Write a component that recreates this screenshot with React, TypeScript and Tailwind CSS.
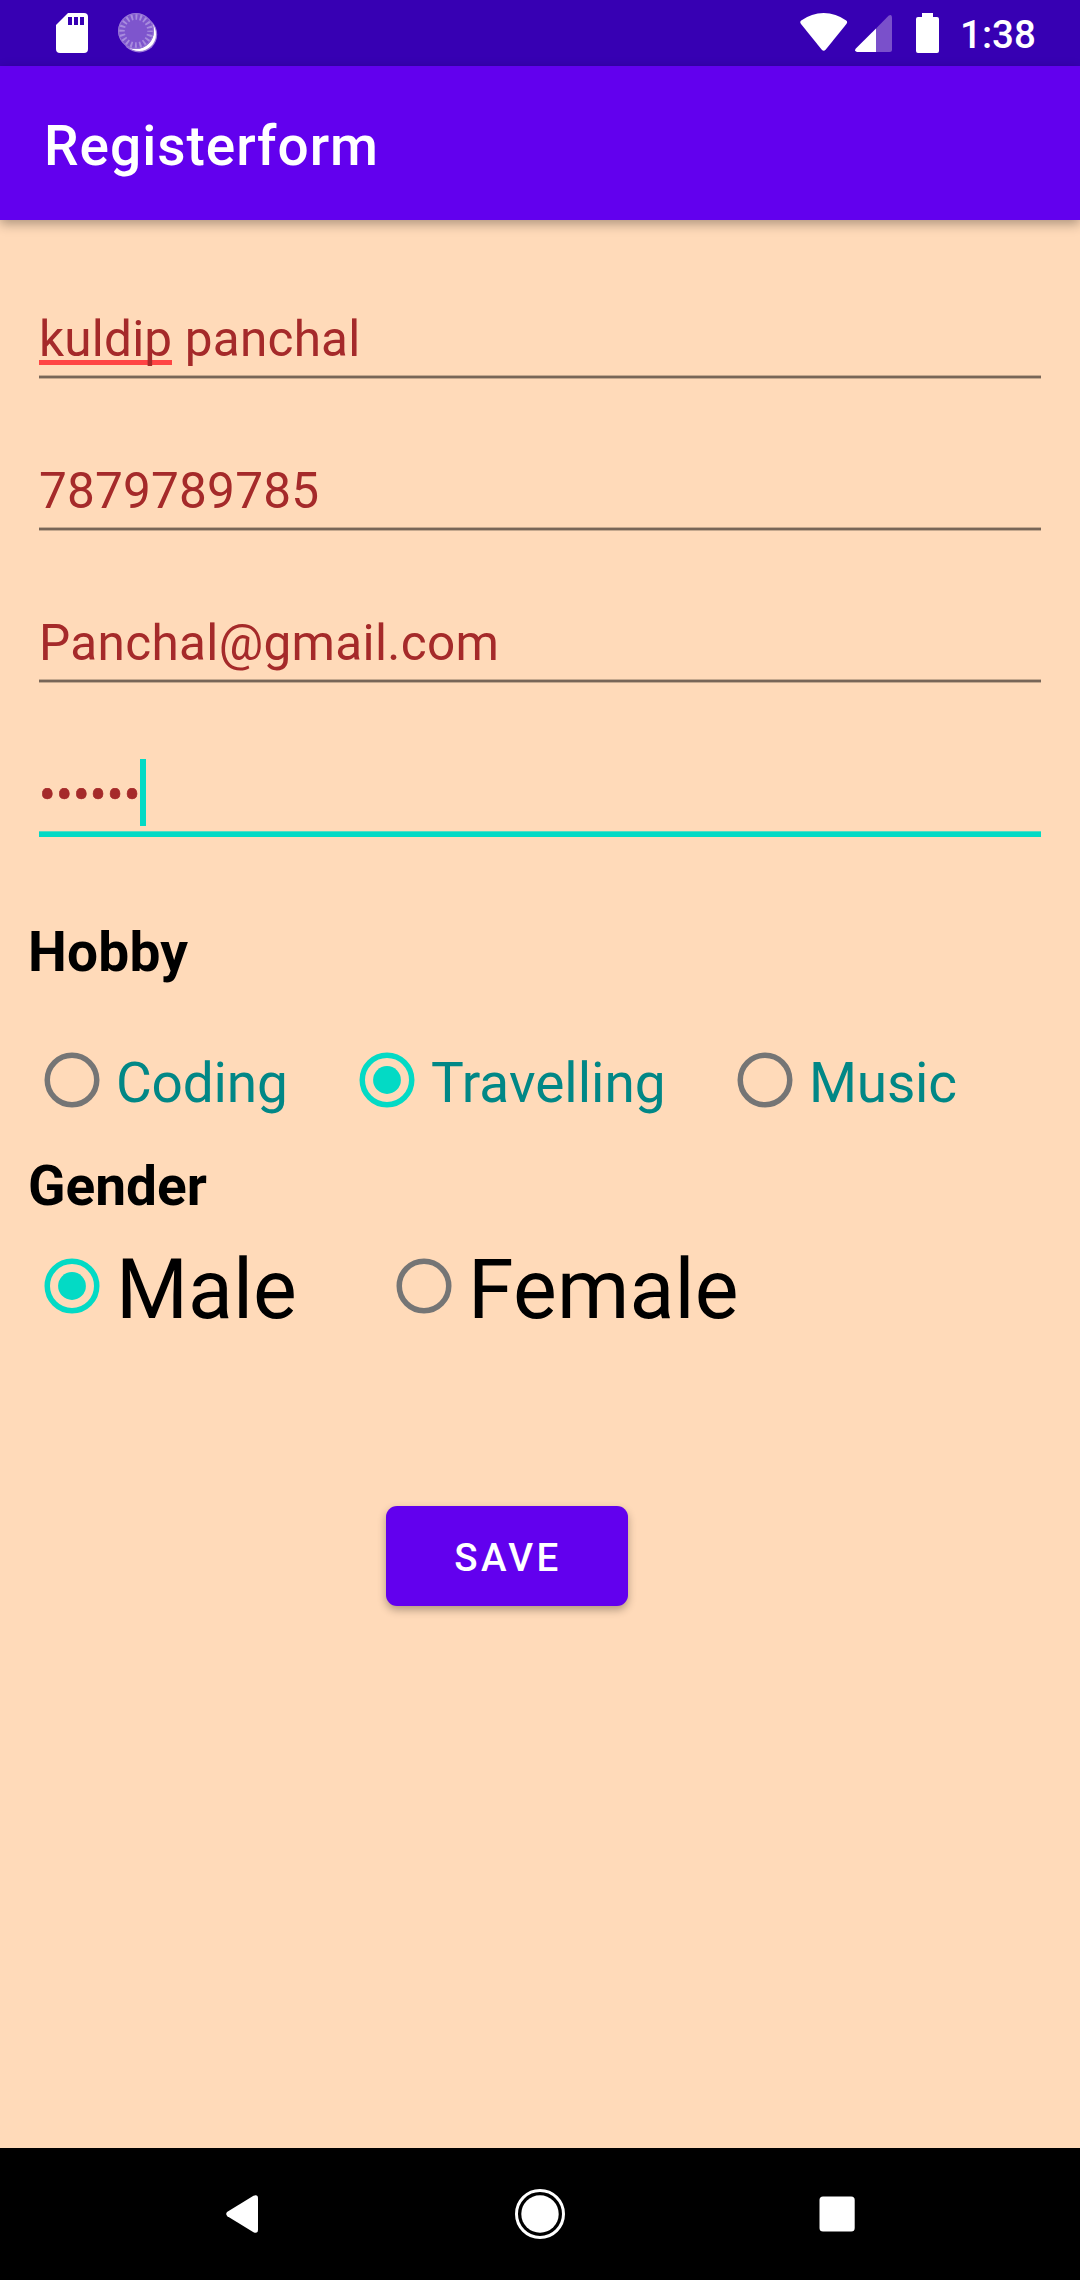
import React from "react";

function StatusBar() {
  return (
    <div className="flex h-[66px] items-start bg-[#3700b3] text-white">
      <svg className="ml-[56px] mt-[13px] h-[40px] w-[32px]" viewBox="0 0 32 40">
        <path d="M12 0H28Q32 0 32 4V36Q32 40 28 40H4Q0 40 0 36V12Z" fill="#fff" />
        <path d="M12 4h4v8h-4zM18 4h4v8h-4zM24 4h4v8h-4z" fill="#3700b3" />
      </svg>
      <svg className="ml-[30px] mt-[13px] h-[40px] w-[40px]" viewBox="0 0 40 40">
        <circle cx="21.2" cy="21.4" r="18" fill="#9b7ad9" />
        <circle cx="21.2" cy="21.2" r="16.8" fill="#fff" />
        <circle cx="18" cy="18" r="18" fill="#7e55cd" />
        <circle cx="18" cy="18" r="17.4" fill="none" stroke="#9b7ad9" strokeWidth="1" />
        <circle
          cx="18"
          cy="18"
          r="14"
          fill="none"
          stroke="#a88cde"
          strokeWidth="5.5"
          strokeDasharray="1.9 2.498"
          strokeDashoffset="0.95"
        />
      </svg>
      <svg className="ml-auto mt-[13px] h-[39px] w-[48px]" viewBox="0 0 48 39">
        <path
          d="M1 11Q-0.6 9 1.2 7.6Q11.5 0 23.7 0Q36 0 46.2 7.6Q48 9 46.4 11L25.6 36.7Q23.7 39 21.8 36.7Z"
          fill="#fff"
        />
      </svg>
      <svg className="ml-[7px] mt-[14px] h-[38px] w-[38px]" viewBox="0 0 38 38">
        <path d="M33.8 1.6Q37 -0.5 37 3.5V35.5Q37 38 34.5 38H21V14.4Z" fill="#7a50cb" />
        <path d="M21 14.4V38H2Q-0.8 37.4 0.6 34.8Z" fill="#fff" />
      </svg>
      <svg className="ml-[23px] mt-[13px] h-[40px] w-[23px]" viewBox="0 0 23 40">
        <path
          d="M6 0H17V4H21Q23 4 23 6V38Q23 40 21 40H2Q0 40 0 38V6Q0 4 2 4H6Z"
          fill="#fff"
        />
      </svg>
      <span className="ml-[21px] mr-[44px] mt-[10px] w-[76px] whitespace-nowrap text-[38.5px] font-medium leading-[50px]">
        1:38
      </span>
    </div>
  );
}

function Field({ className, children }: { className: string; children: React.ReactNode }) {
  return (
    <div className="flex h-[152px] flex-col justify-end">
      <div className={`mb-[7px] text-[49.5px] leading-[58px] text-[#a52a2a] ${className}`}>{children}</div>
      <div className="h-[4px] border-y border-[#c5a98f] bg-[#786658]" />
    </div>
  );
}

function Radio({
  label,
  checked = false,
  className,
  labelClass,
}: {
  label: string;
  checked?: boolean;
  className: string;
  labelClass: string;
}) {
  const color = checked ? "#03dac5" : "#757575";
  return (
    <label className={`flex items-center ${className}`}>
      <svg className="h-[88px] w-[88px] shrink-0" viewBox="0 0 88 88">
        <circle cx="44" cy="44" r="24.75" fill="none" stroke={color} strokeWidth="5.5" />
        {checked && <circle cx="44" cy="44" r="13.9" fill={color} />}
      </svg>
      <span className={`whitespace-nowrap ${labelClass}`}>{label}</span>
    </label>
  );
}

export default function App() {
  return (
    <div className="flex h-[2280px] w-[1080px] flex-col overflow-hidden bg-[#ffdab9] font-['Roboto',sans-serif]">
      <StatusBar />
      <header className="h-[154px] bg-[#6200ee] pl-[44px] pt-[48px] text-[55px] font-medium leading-[64px] tracking-[0.98px] text-white shadow-[0_4px_11px_rgba(0,0,0,0.32)]">
        Registerform
      </header>

      <main className="flex flex-1 flex-col">
        <div className="mt-[7px] px-[39px]">
          <Field className="tracking-[0.2px]">
            <span className="relative z-0">
              <span className="absolute left-0 top-[50px] -z-10 h-[5px] w-[133px] bg-[#ff4444]" />
              kuldip
            </span>{" "}
            panchal
          </Field>
          <Field className="tracking-[0.2px]">7879789785</Field>
          <Field className="tracking-[0.33px]">Panchal@gmail.com</Field>
          <div className="flex h-[154px] flex-col justify-end">
            <div className="relative mb-[7px] text-[49.5px] leading-[58px] tracking-[0.25px] text-[#a52a2a] [-webkit-text-stroke:0.6px_#a52a2a]">
              ••••••
              <span className="absolute left-[101px] top-[-7px] h-[67px] w-[6px] bg-[#03dac5]" />
            </div>
            <div className="h-[6px] border-t border-[#55dbc3] bg-[#03dac5]" />
          </div>
        </div>

        <h2 className="mt-[83px] pl-[28px] text-[55px] font-bold leading-[64px] tracking-[0.2px] text-black">
          Hobby
        </h2>
        <div className="mt-[52px] flex h-[88px] pl-[28px]">
          <Radio label="Coding" className="w-[315px]" labelClass="pt-[6px] text-[55px] leading-[64px] tracking-[-0.2px] text-[#018786]" />
          <Radio label="Travelling" checked className="w-[378px]" labelClass="pt-[6px] text-[55px] leading-[64px] text-[#018786]" />
          <Radio label="Music" className="" labelClass="pt-[6px] text-[55px] leading-[64px] tracking-[-0.2px] text-[#018786]" />
        </div>

        <h2 className="mt-[30px] pl-[28px] text-[55px] font-bold leading-[64px] text-black">
          Gender
        </h2>
        <div className="mt-[19px] flex h-[98px] pl-[28px]">
          <Radio label="Male" checked className="w-[352px]" labelClass="pt-[7px] text-[82.5px] leading-[90px] text-black" />
          <Radio label="Female" className="" labelClass="pt-[7px] text-[82.5px] leading-[90px] tracking-[0.2px] text-black" />
        </div>

        <button className="ml-[386px] mt-[171px] h-[100px] w-[242px] rounded-[11px] bg-[#6200ee] pl-[2px] pt-[4px] text-[38.5px] font-medium leading-[48px] tracking-[3.4px] text-white shadow-[0_4px_8px_rgba(0,0,0,0.3)]">
          SAVE
        </button>
      </main>

      <nav className="flex h-[132px] items-center bg-black">
        <svg className="ml-[226px] h-[38px] w-[32px]" viewBox="0 0 32 38">
          <path d="M1.4 16.8L27.5 0.8Q32 -1 32 3.5V34.5Q32 39 27.5 37.2L1.4 21.2Q-1 19 1.4 16.8Z" fill="#fff" />
        </svg>
        <svg className="ml-[257px] h-[50px] w-[50px]" viewBox="0 0 50 50">
          <circle cx="25" cy="25" r="23.5" fill="none" stroke="#fff" strokeWidth="3" />
          <circle cx="25" cy="25" r="18.7" fill="#fff" />
        </svg>
        <svg className="ml-[254px] h-[36px] w-[36px]" viewBox="0 0 36 36">
          <rect x="0.5" y="0.4" width="35.2" height="35.2" rx="3.5" fill="#fff" />
        </svg>
      </nav>
    </div>
  );
}
